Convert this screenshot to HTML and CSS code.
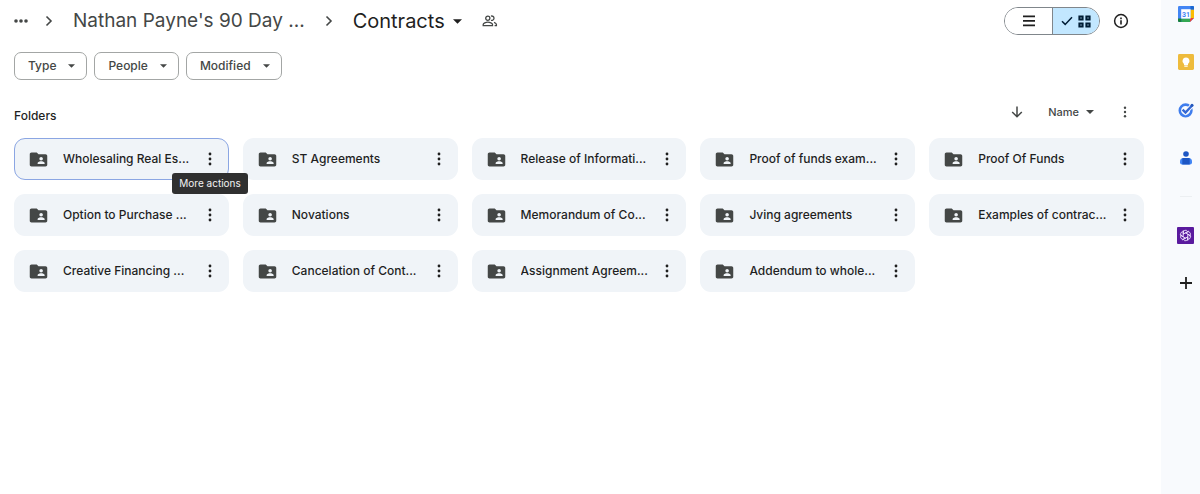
FILE: index.html
```html
<!DOCTYPE html>
<html lang="en">
<head>
<meta charset="utf-8">
<meta name="viewport" content="width=device-width, initial-scale=1">
<title>Contracts</title>
<link rel="stylesheet" href="styles.css">
</head>
<body>
<svg class="defs" aria-hidden="true">
  <symbol id="folder" viewBox="0 0 24 24"><path d="M20 6h-8l-2-2H4c-1.100 0-1.990.9-1.990 2L2 18c0 1.100.9 2 2 2h16c1.100 0 2-.9 2-2V8c0-1.100-.9-2-2-2zm-5 3c1.100 0 2 .9 2 2s-.9 2-2 2-2-.9-2-2 .9-2 2-2zm4 8h-8v-1c0-1.330 2.670-2 4-2s4 .67 4 2v1z"/></symbol>
  <symbol id="dots" viewBox="0 0 4 14"><circle cx="2" cy="2" r="1.400"/><circle cx="2" cy="7" r="1.400"/><circle cx="2" cy="12" r="1.400"/></symbol>
  <symbol id="caret" viewBox="0 0 8 4"><path d="M0 0h8L4 4z"/></symbol>
  <symbol id="chevron" viewBox="0 0 8 12"><path d="M1.500 1.500 6 6l-4.500 4.500" fill="none" stroke="currentColor" stroke-width="1.600"/></symbol>
</svg>
<div class="app">
  <main class="main">
    <header class="top">
      <nav class="crumbs" aria-label="Breadcrumb">
        <button class="plain" aria-label="Show path"><svg width="14" height="4" viewBox="0 0 14 4"><circle cx="2" cy="2" r="1.800"/><circle cx="7" cy="2" r="1.800"/><circle cx="12" cy="2" r="1.800"/></svg></button>
        <svg class="sep first" width="8" height="12"><use href="#chevron"/></svg>
        <a class="crumb" href="#">Nathan Payne's 90 Day ...</a>
        <svg class="sep" width="8" height="12"><use href="#chevron"/></svg>
        <button class="plain current">Contracts<svg width="9" height="5"><use href="#caret"/></svg></button>
        <button class="plain people" aria-label="Manage access"><svg class="line" width="16" height="12" viewBox="0 0 16 12" stroke="currentColor" stroke-width="1.300"><circle cx="5.800" cy="3.200" r="2.100"/><path d="M1.200 10.700V9.500C1.200 8.200 3.800 7.200 5.800 7.200s4.700 1 4.700 2.300v1.200zM9 1.100c1.400-.4 3 .5 3 2.100s-1.600 2.500-3 2.100M12 7.300c1.500.5 2.400 1.300 2.400 2.300v1.100h-1.800"/></svg></button>
      </nav>
      <div class="tools">
        <div class="toggle" role="group" aria-label="Layout">
          <button aria-label="List layout"><svg width="12" height="12" viewBox="0 0 12 12"><path d="M0 .5h12v1.800H0zM0 5h12v1.800H0zM0 9.500h12v1.800H0z"/></svg></button>
          <button class="on" aria-label="Grid layout" aria-pressed="true"><svg width="12" height="10" viewBox="0 0 12 10"><path d="m1 5.200 3.200 3.200L11 1.200" fill="none" stroke="currentColor" stroke-width="1.500"/></svg><svg width="13" height="13" viewBox="0 0 13 13"><path d="M1.400 1.400h3.200v3.200H1.400zM8.400 1.400h3.200v3.200H8.400zM1.400 8.400h3.200v3.200H1.400zM8.400 8.400h3.200v3.200H8.400z" fill="none" stroke="currentColor" stroke-width="2"/></svg></button>
        </div>
        <button class="plain" aria-label="View details"><svg width="16" height="16" viewBox="0 0 16 16"><circle cx="8" cy="8" r="6.400" fill="none" stroke="currentColor" stroke-width="1.500"/><path d="M7.200 7.200h1.600v4.200H7.200zM7.200 4.600h1.600v1.600H7.200z"/></svg></button>
      </div>
    </header>
    <div class="filters">
      <button class="chip">Type<svg width="7" height="4"><use href="#caret"/></svg></button>
      <button class="chip">People<svg width="7" height="4"><use href="#caret"/></svg></button>
      <button class="chip">Modified<svg width="7" height="4"><use href="#caret"/></svg></button>
    </div>
    <div class="section">
      <h2>Folders</h2>
      <div class="sort">
        <button class="plain" aria-label="Reverse sort direction"><svg width="12" height="12" viewBox="0 0 12 12"><path d="M6 .5v10M1.200 6 6 10.800 10.800 6" fill="none" stroke="currentColor" stroke-width="1.500"/></svg></button>
        <button class="plain by">Name<svg width="8" height="4"><use href="#caret"/></svg></button>
        <button class="plain" aria-label="More sorting options"><svg width="4" height="12"><use href="#dots"/></svg></button>
      </div>
    </div>
    <ul class="grid">
      <li class="card selected"><svg class="folder"><use href="#folder"/></svg><a href="#">Wholesaling Real Es...</a><button class="plain more" aria-label="More"><svg width="4" height="14"><use href="#dots"/></svg></button><span class="tip" role="tooltip">More actions</span></li>
      <li class="card"><svg class="folder"><use href="#folder"/></svg><a href="#">ST Agreements</a><button class="plain more" aria-label="More"><svg width="4" height="14"><use href="#dots"/></svg></button></li>
      <li class="card"><svg class="folder"><use href="#folder"/></svg><a href="#">Release of Informati...</a><button class="plain more" aria-label="More"><svg width="4" height="14"><use href="#dots"/></svg></button></li>
      <li class="card"><svg class="folder"><use href="#folder"/></svg><a href="#">Proof of funds exam...</a><button class="plain more" aria-label="More"><svg width="4" height="14"><use href="#dots"/></svg></button></li>
      <li class="card"><svg class="folder"><use href="#folder"/></svg><a href="#">Proof Of Funds</a><button class="plain more" aria-label="More"><svg width="4" height="14"><use href="#dots"/></svg></button></li>
      <li class="card"><svg class="folder"><use href="#folder"/></svg><a href="#">Option to Purchase ...</a><button class="plain more" aria-label="More"><svg width="4" height="14"><use href="#dots"/></svg></button></li>
      <li class="card"><svg class="folder"><use href="#folder"/></svg><a href="#">Novations</a><button class="plain more" aria-label="More"><svg width="4" height="14"><use href="#dots"/></svg></button></li>
      <li class="card"><svg class="folder"><use href="#folder"/></svg><a href="#">Memorandum of Co...</a><button class="plain more" aria-label="More"><svg width="4" height="14"><use href="#dots"/></svg></button></li>
      <li class="card"><svg class="folder"><use href="#folder"/></svg><a href="#">Jving agreements</a><button class="plain more" aria-label="More"><svg width="4" height="14"><use href="#dots"/></svg></button></li>
      <li class="card"><svg class="folder"><use href="#folder"/></svg><a href="#">Examples of contrac...</a><button class="plain more" aria-label="More"><svg width="4" height="14"><use href="#dots"/></svg></button></li>
      <li class="card"><svg class="folder"><use href="#folder"/></svg><a href="#">Creative Financing ...</a><button class="plain more" aria-label="More"><svg width="4" height="14"><use href="#dots"/></svg></button></li>
      <li class="card"><svg class="folder"><use href="#folder"/></svg><a href="#">Cancelation of Cont...</a><button class="plain more" aria-label="More"><svg width="4" height="14"><use href="#dots"/></svg></button></li>
      <li class="card"><svg class="folder"><use href="#folder"/></svg><a href="#">Assignment Agreem...</a><button class="plain more" aria-label="More"><svg width="4" height="14"><use href="#dots"/></svg></button></li>
      <li class="card"><svg class="folder"><use href="#folder"/></svg><a href="#">Addendum to whole...</a><button class="plain more" aria-label="More"><svg width="4" height="14"><use href="#dots"/></svg></button></li>
    </ul>
  </main>
  <aside class="rail" aria-label="Side panel">
    <div class="group">
      <button class="plain" aria-label="Calendar"><svg width="16" height="16" viewBox="0 0 16 16"><path d="M1.200 0h13.600Q16 0 16 1.200V12l-4 4H1.200Q0 16 0 14.800V1.200Q0 0 1.200 0z" fill="#4285f4"/><path d="M12.500 3.500H16V12h-3.500z" fill="#fbbc04"/><path d="M3.500 12.500H12V16H3.500z" fill="#34a853"/><path d="M0 12.500h3.500V16H1.200Q0 16 0 14.800z" fill="#188038"/><path d="M12.500 0h2.300Q16 0 16 1.200v2.300h-3.500z" fill="#1967d2"/><path d="M12 12h4l-4 4z" fill="#ea4335"/><path d="M3.200 3.200h9.400v9.400H3.200z" fill="#fff"/><text class="day" x="8" y="10.500" text-anchor="middle">31</text></svg></button>
      <button class="plain" aria-label="Keep"><svg width="16" height="16" viewBox="0 0 16 16"><rect width="16" height="16" rx="1.400" fill="#eebb3c"/><path d="M8 3.500a3.500 3.500 0 0 0-2 6.400v1h4v-1A3.500 3.500 0 0 0 8 3.500zM6.300 11.600h3.400v1.200H6.300z" fill="#fff"/></svg></button>
      <button class="plain" aria-label="Tasks"><svg class="line" width="16" height="16" viewBox="0 0 16 16"><circle cx="7.600" cy="8.400" r="5.800" stroke="#3f7ded" stroke-width="2.600"/><path d="m4.900 7.800 2.600 2.600 6.800-7.200" stroke="#f8fafd" stroke-width="4.200"/><path d="m4.600 7.600 2.900 2.900 6.800-7.300" stroke="#3568d4" stroke-width="2.400"/><circle cx="14" cy="3.200" r="1.500" fill="#2458bd"/></svg></button>
      <button class="plain" aria-label="Contacts"><svg width="16" height="16" viewBox="0 0 16 16"><circle cx="8" cy="4" r="2.800" fill="#1d56c4"/><path d="M2 11.500Q2 8 5.500 8h5Q14 8 14 11.500v1q0 2-2 2H4q-2 0-2-2z" fill="#4285f4"/><path d="M4.300 8.200Q5 8 5.500 8h5q.6 0 1.200.2v6.300H4.300z" fill="#1d56c4"/></svg></button>
    </div>
    <hr>
    <div class="group">
      <button class="plain" aria-label="Assistant add-on"><svg width="17" height="17" viewBox="0 0 17 17"><rect width="17" height="17" rx="1" fill="#5a1a9e"/><g transform="translate(8.500 8.500)" fill="none" stroke="#f1e6ff" stroke-width=".85"><path id="strand" d="M-2.300 1.400v-4.300a2.300 2.300 0 0 1 4.300-1.200M0-2.500l3.400-2"/><use href="#strand" transform="rotate(60)"/><use href="#strand" transform="rotate(120)"/><use href="#strand" transform="rotate(180)"/><use href="#strand" transform="rotate(240)"/><use href="#strand" transform="rotate(300)"/></g></svg></button>
      <button class="plain" aria-label="Get add-ons"><svg width="12" height="12" viewBox="0 0 12 12"><path d="M5.100 0h1.800v5.100H12v1.800H6.900V12H5.100V6.900H0V5.100h5.100z"/></svg></button>
    </div>
  </aside>
</div>
</body>
</html>
```
FILE: styles.css
```css
* { box-sizing: border-box; }
body {
  margin: 0;
  background: #fff;
  color: #1f1f1f;
  font: 500 12px/16px Inter, "Liberation Sans", sans-serif;
}
svg { display: block; flex: none; fill: currentColor; }
.line { fill: none; }
.defs { position: absolute; width: 0; height: 0; }
a { color: inherit; text-decoration: none; }
button { font: inherit; color: inherit; cursor: pointer; }
.plain {
  display: flex;
  align-items: center;
  justify-content: center;
  padding: 0;
  border: 0;
  background: none;
}
.app { display: flex; min-height: 100vh; }
.main { flex: 1; min-width: 0; padding: 0 17px 0 14px; }

.top { display: flex; align-items: center; justify-content: space-between; height: 42px; }
.crumbs { display: flex; align-items: center; padding-right: 12px; color: #444746; white-space: nowrap; }
.crumb { font: 400 19px/28px Inter, "Liberation Sans", sans-serif; }
.sep { margin: 0 20px; }
.sep.first { margin-left: 17px; }
.current { gap: 8px; color: #1f1f1f; font: 400 20px/28px Inter, "Liberation Sans", sans-serif; }
.people { margin-left: 20px; color: #444746; }

.tools { display: flex; align-items: center; gap: 13px; padding-right: 15px; }
.toggle { display: flex; height: 28px; border: 1px solid #80868b; border-radius: 14px; overflow: hidden; }
.toggle button {
  display: flex;
  align-items: center;
  justify-content: center;
  gap: 5px;
  width: 47px;
  padding: 0;
  border: 0;
  background: #fff;
}
.toggle .on { border-left: 1px solid #80868b; background: #c2e7ff; color: #001d35; }

.filters { display: flex; gap: 7px; margin-top: 10px; }
.chip {
  display: flex;
  align-items: center;
  gap: 12px;
  height: 28px;
  padding: 0 11px 0 13px;
  border: 1px solid #a3a6a5;
  border-radius: 7px;
  background: #fff;
  color: #444746;
}

.section { display: flex; align-items: center; justify-content: space-between; height: 32px; margin: 16px 0 10px; }
.section h2 { margin: 0; padding-top: 7px; font: inherit; }
.sort { display: flex; align-items: center; padding-right: 17px; color: #444746; }
.by { gap: 7px; margin: 0 29px 0 25px; font-size: 11px; }

.grid { display: grid; grid-template-columns: repeat(5, minmax(0, 1fr)); gap: 14px; margin: 0; padding: 0; list-style: none; }
.card {
  position: relative;
  display: flex;
  align-items: center;
  height: 42px;
  padding: 0 16px 0 13px;
  border: 1px solid transparent;
  border-radius: 11px;
  background: #f0f4f8;
}
.card.selected { border-color: #8ba6e3; }
.card a { flex: 1; min-width: 0; overflow: hidden; white-space: nowrap; }
.folder { width: 21px; height: 21px; margin-right: 14px; color: #444746; }
.tip {
  position: absolute;
  z-index: 1;
  top: 34px;
  right: -20px;
  padding: 2px 7px 3px;
  border-radius: 3px;
  background: #303030;
  color: #f2f2f2;
  font-size: 10px;
  font-weight: 400;
  white-space: nowrap;
}

.rail { width: 39px; padding: 6px 0 0 10px; background: #f8fafd; }
.group { display: flex; flex-direction: column; gap: 32px; }
.group .plain { height: 16px; }
.rail hr { width: 12px; height: 1px; margin: 30px auto; border: 0; background: #eceff2; }
.day { fill: #4285f4; font: 700 7px Roboto, sans-serif; }
```
